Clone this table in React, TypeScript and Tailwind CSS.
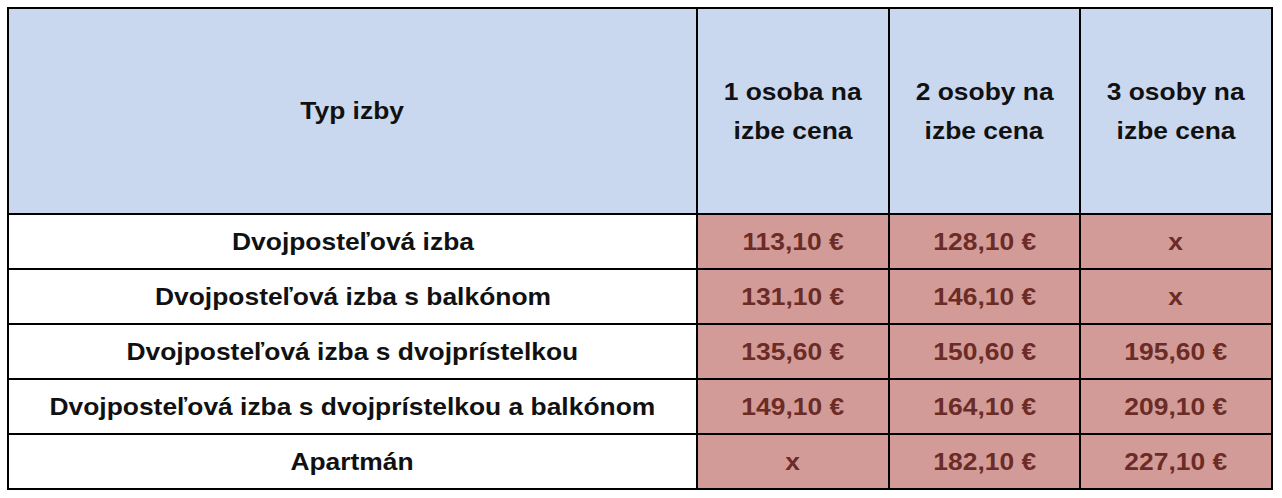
import React from "react";

const rows: [string, string, string, string][] = [
  ["Dvojposteľová izba", "113,10 €", "128,10 €", "x"],
  ["Dvojposteľová izba s balkónom", "131,10 €", "146,10 €", "x"],
  ["Dvojposteľová izba s dvojprístelkou", "135,60 €", "150,60 €", "195,60 €"],
  ["Dvojposteľová izba s dvojprístelkou a balkónom", "149,10 €", "164,10 €", "209,10 €"],
  ["Apartmán", "x", "182,10 €", "227,10 €"],
];

function T({ children }: { children: React.ReactNode }) {
  return <span className="inline-block scale-x-[1.1] whitespace-nowrap">{children}</span>;
}

export default function App() {
  return (
    <div className="w-[1282px] h-[498px] bg-white pt-[7px] pl-[7px]" style={{ fontFamily: '"Liberation Sans", Arial, sans-serif' }}>
      <div className="grid grid-cols-[689px_192px_191px_192px] border-l-2 border-t-2 border-black w-fit font-bold text-[24px] text-[#111]">
        <div className="h-[206px] bg-[#c9d8ef] border-r-2 border-b-2 border-black flex items-center justify-center">
          <T>Typ izby</T>
        </div>
        {["1 osoba na", "2 osoby na", "3 osoby na"].map((t) => (
          <div key={t} className="h-[206px] bg-[#c9d8ef] border-r-2 border-b-2 border-black flex flex-col items-center justify-center leading-[39px] text-center">
            <T>{t}</T>
            <T>izbe cena</T>
          </div>
        ))}
        {rows.map((r) => (
          <React.Fragment key={r[0]}>
            <div className="h-[55px] bg-white border-r-2 border-b-2 border-black flex items-center justify-center">
              <T>{r[0]}</T>
            </div>
            {r.slice(1).map((v, i) => (
              <div key={i} className="h-[55px] bg-[#d29b97] text-[#6b2b26] border-r-2 border-b-2 border-black flex items-center justify-center">
                <T>{v}</T>
              </div>
            ))}
          </React.Fragment>
        ))}
      </div>
    </div>
  );
}
